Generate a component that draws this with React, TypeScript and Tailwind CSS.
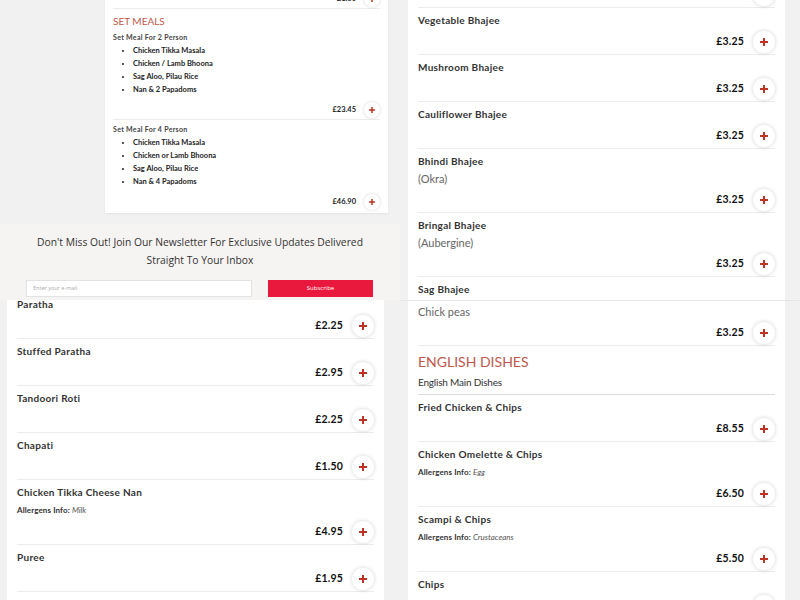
import React from "react";

type ItemProps = { name: string; desc?: string; allergen?: string; price: string };

const font = { fontFamily: "Lato, 'Open Sans', sans-serif" };

function AddBtn({ small }: { small?: boolean }) {
  return (
    <span
      className={
        small
          ? "flex h-[16px] w-[16px] shrink-0 items-center justify-center rounded-full bg-white shadow-[0_0_3px_rgba(0,0,0,0.18)]"
          : "flex h-[22px] w-[22px] shrink-0 items-center justify-center rounded-full bg-white shadow-[0_0_4px_rgba(0,0,0,0.18)]"
      }
    >
      <svg width={small ? 6 : 8} height={small ? 6 : 8} viewBox="0 0 8 8">
        <path d="M3 0h2v3h3v2H5v3H3V5H0V3h3z" fill="#bf3326" />
      </svg>
    </span>
  );
}

function Item({ name, desc, allergen, price }: ItemProps) {
  const gap = desc ? "mt-[2px]" : allergen ? "mt-[3px]" : "mt-[4px]";
  return (
    <div className="border-t border-[#ececec] pt-[6px]">
      <div className="text-[10px] font-bold leading-[12px] tracking-[0.3px] text-[#333]">{name}</div>
      {desc && <div className="mt-[5px] text-[11px] leading-[14px] text-[#666]">{desc}</div>}
      {allergen && (
        <div className="mt-[5px] text-[8px] leading-[14px] text-[#333]">
          <span className="font-bold tracking-[0.1px]">Allergens Info:</span>{" "}
          <span className="italic text-[#555]">{allergen}</span>
        </div>
      )}
      <div className={`flex h-[24px] items-center justify-end gap-[9px] ${gap}`}>
        <span className="text-[10.5px] font-bold tracking-[0.2px] text-[#111]">{price}</span>
        <AddBtn />
      </div>
    </div>
  );
}

function MealBlock({ title, items, price, first }: { title: string; items: string[]; price: string; first?: boolean }) {
  return (
    <div className={first ? "" : "border-t border-[#ececec] pt-[4px]"}>
      <div className="text-[7px] font-bold leading-[10px] tracking-[0.3px] text-[#444]">{title}</div>
      <ul className="mt-[2px] list-disc pl-[20px] marker:text-[#222]">
        {items.map((i) => (
          <li key={i} className="text-[7.5px] font-bold leading-[13px] text-[#222]">
            {i}
          </li>
        ))}
      </ul>
      <div className="mt-[5px] flex h-[18px] items-center justify-end gap-[8px]">
        <span className="text-[7.5px] font-bold text-[#222]">{price}</span>
        <AddBtn small />
      </div>
    </div>
  );
}

function TopLeft() {
  return (
    <div className="flex flex-col overflow-hidden bg-[#f1f1f1]" style={font}>
      <div className="h-[224px] overflow-hidden pl-[105px] pr-[12px]">
        <div className="mt-[-10px] bg-white px-[8px] pb-[2px] shadow-[0_1px_2px_rgba(0,0,0,0.06)]">
          <div className="flex h-[18px] items-center justify-end gap-[8px]">
            <span className="text-[7.5px] font-bold text-[#222]">£1.60</span>
            <AddBtn small />
          </div>
          <div className="border-t border-[#ececec] pt-[5px]">
            <div className="text-[10px] leading-[14px] text-[#c0574b]">SET MEALS</div>
            <div className="mt-[4px]">
              <MealBlock
                first
                title="Set Meal For 2 Person"
                items={["Chicken Tikka Masala", "Chicken / Lamb Bhoona", "Sag Aloo, Pilau Rice", "Nan & 2 Papadoms"]}
                price="£23.45"
              />
            </div>
          </div>
          <MealBlock
            title="Set Meal For 4 Person"
            items={["Chicken Tikka Masala", "Chicken or Lamb Bhoona", "Sag Aloo, Pilau Rice", "Nan & 4 Papadoms"]}
            price="£46.90"
          />
        </div>
      </div>
      <div className="flex-1 bg-[#f6f4f2] px-[26px] pt-[9px]" style={{ fontFamily: "'Open Sans', sans-serif" }}>
        <p className="text-center text-[10.3px] leading-[18px] text-[#333]">
          Don't Miss Out! Join Our Newsletter For Exclusive Updates Delivered
          <br />
          Straight To Your Inbox
        </p>
        <div className="mt-[11px] flex gap-[16px]">
          <div className="flex h-[17px] w-[226px] items-center border border-[#e2e2e2] bg-white px-[6px] text-[5.5px] text-[#aaa]">
            Enter your e-mail
          </div>
          <div className="flex h-[17px] w-[105px] items-center justify-center bg-[#e8193c] text-[6px] text-white">
            Subscribe
          </div>
        </div>
      </div>
    </div>
  );
}

function TopRight() {
  return (
    <div className="overflow-hidden bg-[#f1f1f1] pl-[8px] pr-[15px]" style={font}>
      <div className="mt-[-40px] bg-white px-[10px]">
        <Item name="Onion Bhajee" price="£3.25" />
        <Item name="Vegetable Bhajee" price="£3.25" />
        <Item name="Mushroom Bhajee" price="£3.25" />
        <Item name="Cauliflower Bhajee" price="£3.25" />
        <Item name="Bhindi Bhajee" desc="(Okra)" price="£3.25" />
        <Item name="Bringal Bhajee" desc="(Aubergine)" price="£3.25" />
        <Item name="Sag Bhajee" desc="Chick peas" price="£3.25" />
      </div>
    </div>
  );
}

function BottomLeft() {
  return (
    <div className="overflow-hidden bg-[#f1f1f1] pl-[7px] pr-[16px]" style={font}>
      <div className="mt-[-9px] bg-white px-[10px]">
        <Item name="Paratha" price="£2.25" />
        <Item name="Stuffed Paratha" price="£2.95" />
        <Item name="Tandoori Roti" price="£2.25" />
        <Item name="Chapati" price="£1.50" />
        <Item name="Chicken Tikka Cheese Nan" allergen="Milk" price="£4.95" />
        <Item name="Puree" price="£1.95" />
        <Item name="Keema Nan" price="£2.95" />
      </div>
    </div>
  );
}

function BottomRight() {
  return (
    <div className="overflow-hidden border-t border-[#e6e6e6] bg-[#f1f1f1] pl-[8px] pr-[15px]" style={font}>
      <div className="mt-[-20px] bg-white px-[10px]">
        <Item name="Sag Bhajee" desc="Chick peas" price="£3.25" />
        <div className="border-t border-[#ececec] pt-[7px] pb-[5px]">
          <div className="text-[14px] leading-[18px] text-[#c0574b]">ENGLISH DISHES</div>
          <div className="mt-[4px] text-[10px] leading-[14px] tracking-[-0.2px] text-[#333]">English Main Dishes</div>
        </div>
        <div className="[&>div:first-child]:border-[#dcdcdc]">
          <Item name="Fried Chicken & Chips" price="£8.55" />
          <Item name="Chicken Omelette & Chips" allergen="Egg" price="£6.50" />
          <Item name="Scampi & Chips" allergen="Crustaceans" price="£5.50" />
          <Item name="Chips" price="£2.50" />
        </div>
      </div>
    </div>
  );
}

export default function App() {
  return (
    <div className="grid h-[600px] w-[800px] grid-cols-[400px_400px] grid-rows-[300px_300px] overflow-hidden bg-[#f1f1f1]">
      <TopLeft />
      <TopRight />
      <BottomLeft />
      <BottomRight />
    </div>
  );
}
